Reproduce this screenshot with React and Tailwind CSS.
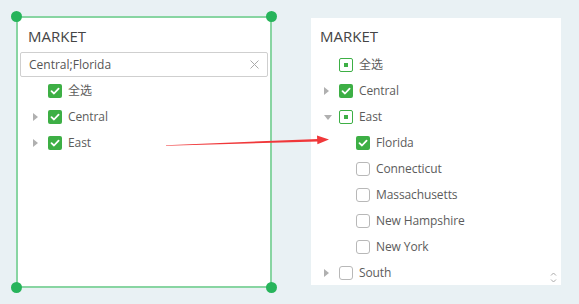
import React from "react";

const FONT = { fontFamily: '"Open Sans", "Noto Sans CJK SC", sans-serif' };

// checkbox states: "on", "part", "off"
const Box = ({ state }) => {
    if (state === "on") {
        return (
            <span className="flex h-[14px] w-[14px] shrink-0 items-center justify-center rounded-[2px] bg-[#3daf45]">
                <svg width="10" height="10" viewBox="0 0 10 10">
                    <path d="M1.5 5.2 L4 7.5 L8.6 2.6" fill="none" stroke="#fff" strokeWidth="1.8" strokeLinecap="round" strokeLinejoin="round" />
                </svg>
            </span>
        );
    }
    if (state === "part") {
        return (
            <span className="flex h-[14px] w-[14px] shrink-0 items-center justify-center rounded-[2px] border border-[#3daf45] bg-white">
                <span className="h-[4px] w-[4px] bg-[#3daf45]" />
            </span>
        );
    }
    return <span className="h-[14px] w-[14px] shrink-0 rounded-[3px] border border-[#b8b8b8] bg-white" />;
};

const Caret = ({ dir }) => (
    <span className="flex w-[15px] shrink-0 items-center">
        {dir === "right" && (
            <svg width="5" height="8" viewBox="0 0 5 8">
                <path d="M0 0 L5 4 L0 8 Z" fill="#b0b0b0" />
            </svg>
        )}
        {dir === "down" && (
            <svg width="8" height="5" viewBox="0 0 8 5">
                <path d="M0 0 L8 0 L4 5 Z" fill="#b0b0b0" />
            </svg>
        )}
    </span>
);

const Row = ({ caret, state, label, indent = 0 }) => (
    <div className="flex h-[26px] items-center text-[12px] tracking-[-0.1px] text-[#5c5c5c]" style={{ paddingLeft: indent }}>
        <Caret dir={caret} />
        <Box state={state} />
        <span className="ml-[6px] leading-none">{label}</span>
    </div>
);

const Dot = ({ pos }) => (
    <span className={`absolute h-[11px] w-[11px] rounded-full bg-[#27b45b] ${pos}`} />
);

export default function App() {
    return (
        <div className="relative flex h-[304px] w-[579px] bg-[#e9f1f4]" style={FONT}>
            {/* left: filter widget, selected */}
            <div className="relative ml-[16px] mt-[16px] h-[272px] w-[256px] border-2 border-[#88d5a2] bg-white">
                <Dot pos="-left-[7px] -top-[7px]" />
                <Dot pos="-right-[7px] -top-[7px]" />
                <Dot pos="-left-[7px] -bottom-[7px]" />
                <Dot pos="-right-[7px] -bottom-[7px]" />
                <div className="pl-[10px] pt-[8px] text-[15px] leading-[20px] text-[#454545]">MARKET</div>
                <div className="mx-[2px] mt-[6px] flex h-[25px] items-center justify-between rounded-[2px] border border-[#cfcfcf] px-[8px] text-[12px] text-[#555]">
                    <span>Central;Florida</span>
                    <svg width="9" height="9" viewBox="0 0 9 9">
                        <path d="M0.5 0.5 L8.5 8.5 M8.5 0.5 L0.5 8.5" stroke="#aaa" strokeWidth="1" />
                    </svg>
                </div>
                <div className="mt-[1px] pl-[15px]">
                    <Row state="on" label="全选" />
                    <Row caret="right" state="on" label="Central" />
                    <Row caret="right" state="on" label="East" />
                </div>
            </div>

            {/* right: expanded tree */}
            <div className="relative ml-[39px] mt-[18px] h-[267px] w-[250px] bg-white">
                <div className="pl-[9px] pt-[8px] text-[15px] leading-[20px] text-[#454545]">MARKET</div>
                <div className="mt-[6px] pl-[13px]">
                    <Row state="part" label="全选" />
                    <Row caret="right" state="on" label="Central" />
                    <Row caret="down" state="part" label="East" />
                    <Row state="on" label="Florida" indent={17} />
                    <Row state="off" label="Connecticut" indent={17} />
                    <Row state="off" label="Massachusetts" indent={17} />
                    <Row state="off" label="New Hampshire" indent={17} />
                    <Row state="off" label="New York" indent={17} />
                    <Row caret="right" state="off" label="South" />
                </div>
                <svg className="absolute bottom-[1px] right-[4px]" width="7" height="13" viewBox="0 0 7 13">
                    <path d="M1 4.5 L3.5 2 L6 4.5 M1 8.5 L3.5 11 L6 8.5" fill="none" stroke="#aaa" strokeWidth="1" />
                </svg>
            </div>

            {/* red arrow over both panels */}
            <svg className="pointer-events-none absolute left-0 top-0" width="579" height="304" viewBox="0 0 579 304">
                <path d="M166 145.2 L318 139 L318 141.4 L166 145.8 Z" fill="#f0383a" />
                <path d="M317 135.5 L329 139.6 L317.4 144.3 Z" fill="#f0383a" />
            </svg>
        </div>
    );
}
